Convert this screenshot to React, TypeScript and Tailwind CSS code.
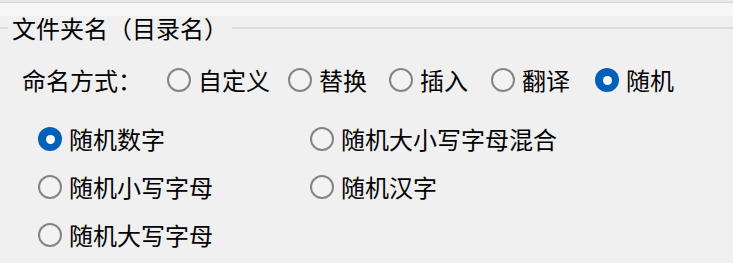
import { useState } from 'react'

const MODES = [
  { id: 'custom', label: '自定义', w: 'w-[121px]' },
  { id: 'replace', label: '替换', w: 'w-[101px]' },
  { id: 'insert', label: '插入', w: 'w-[102px]' },
  { id: 'translate', label: '翻译', w: 'w-[104px]' },
  { id: 'random', label: '随机', w: 'w-auto' },
]

const RANDOM_KINDS = [
  { id: 'digits', label: '随机数字' },
  { id: 'mixed', label: '随机大小写字母混合' },
  { id: 'lower', label: '随机小写字母' },
  { id: 'hanzi', label: '随机汉字' },
  { id: 'upper', label: '随机大写字母' },
]

function Radio({ checked, label, onClick }: { checked: boolean; label: string; onClick: () => void }) {
  return (
    <button type="button" onClick={onClick} className="flex items-center h-[32px] text-left">
      {checked ? (
        <span className="size-[24px] rounded-full bg-[#005fb8] flex items-center justify-center shrink-0">
          <span className="size-[9px] rounded-full bg-white" />
        </span>
      ) : (
        <span className="size-[24px] rounded-full border-2 border-[#858585] bg-[#f3f3f3] shrink-0" />
      )}
      <span className="ml-[7px] text-[24px] leading-none text-black whitespace-nowrap">{label}</span>
    </button>
  )
}

export default function App() {
  const [mode, setMode] = useState('random')
  const [kind, setKind] = useState('digits')

  return (
    <div className="w-[733px] h-[263px] bg-[#f0f0f0] overflow-hidden font-['Noto_Sans_CJK_SC',sans-serif]">
      <div className="h-[2px] bg-[#e9e9e9]" />
      <div className="h-[1px] bg-[#d6d6d6]" />
      <div className="h-[13px] bg-[#f6f6f6]" />

      <div className="flex items-center h-[24px]">
        <div className="w-[8px] h-[2px] bg-[#dadada]" />
        <span className="px-[4px] text-[24px] leading-none text-black whitespace-nowrap">文件夹名（目录名）</span>
        <div className="flex-1 h-[2px] bg-[#dadada]" />
      </div>

      <div className="flex items-center h-[32px] mt-[24px] pl-[22px]">
        <span className="w-[145px] text-[24px] leading-none text-black whitespace-nowrap">命名方式：</span>
        {MODES.map((m) => (
          <div key={m.id} className={m.w}>
            <Radio checked={mode === m.id} label={m.label} onClick={() => setMode(m.id)} />
          </div>
        ))}
      </div>

      <div className="grid grid-cols-[272px_auto] gap-y-[16px] mt-[27px] pl-[38px]">
        {RANDOM_KINDS.map((k) => (
          <Radio key={k.id} checked={kind === k.id} label={k.label} onClick={() => setKind(k.id)} />
        ))}
      </div>
    </div>
  )
}
